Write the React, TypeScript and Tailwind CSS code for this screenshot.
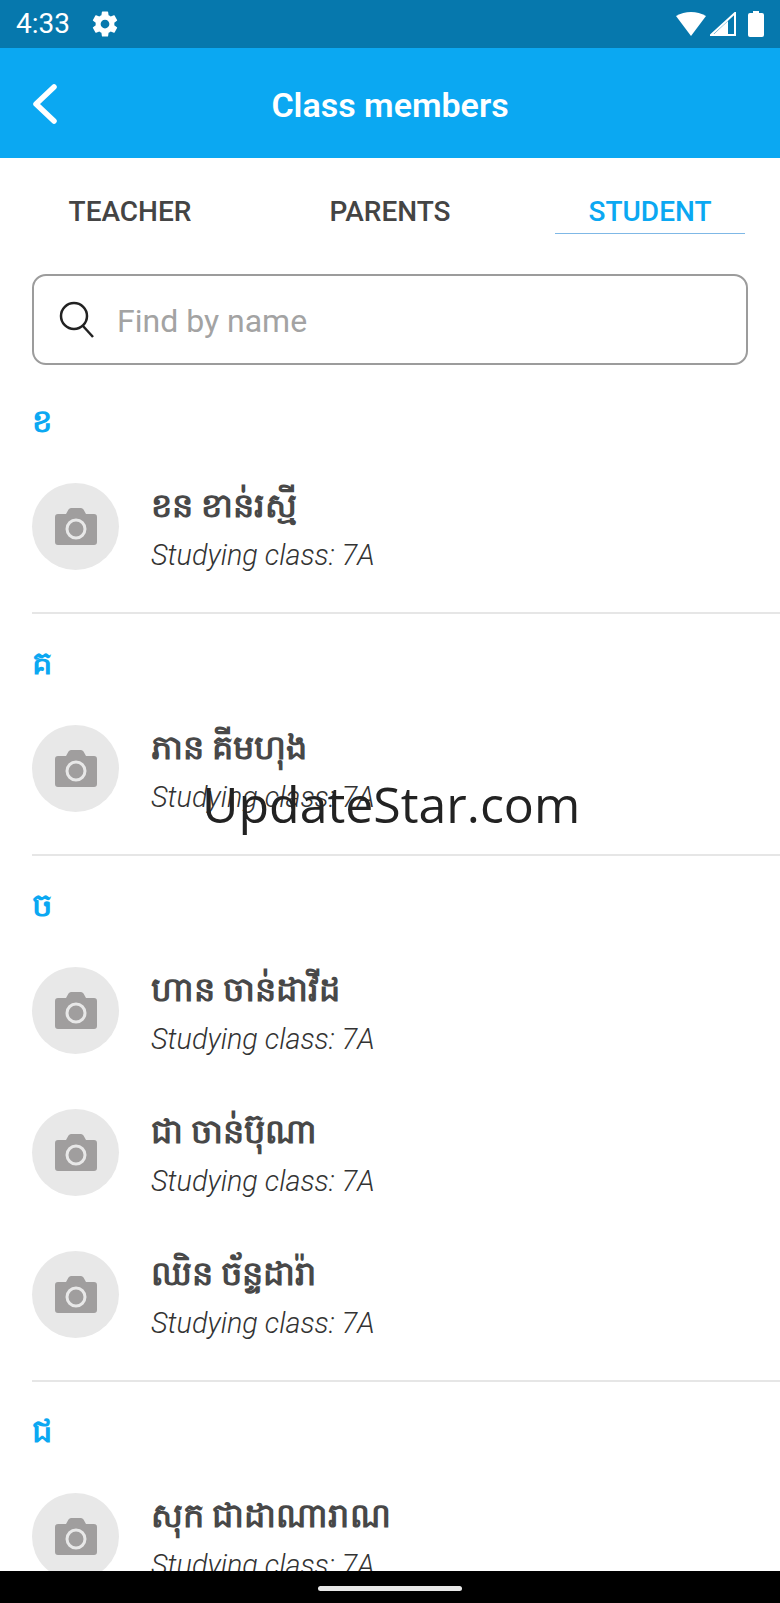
import React from 'react';

const ROBOTO = 'font-["Roboto","Noto_Sans",sans-serif]';

const sections = [
  { letter: 'ខ', people: ['ខន ខាន់រស្មី'] },
  { letter: 'គ', people: ['ភាន គីមហុង'] },
  { letter: 'ច', people: ['ហាន ចាន់ដាវីដ', 'ជា ចាន់ប៊ុណា', 'ឈិន ច័ន្ទដារ៉ា'] },
  { letter: 'ជ', people: ['សុក ជាដាណារាណ'] },
];

const CameraIcon = () => (
  <svg width="42" height="37" viewBox="0 0 42 37">
    <path
      d="M3 6h8l2.500-4.500Q14.500 0 16 0h10q1.500 0 2.500 1.500L31 6h8q3 0 3 3v25q0 3-3 3H3q-3 0-3-3V9q0-3 3-3z"
      fill="#a09e9e"
    />
    <circle cx="21" cy="21" r="9" fill="#a09e9e" stroke="#e8e8e8" strokeWidth="3" />
  </svg>
);

const Member = ({ name }: { name: string }) => (
  <div className="flex h-[87px] items-center">
    <div className="flex h-[87px] w-[87px] shrink-0 items-center justify-center rounded-full bg-[#e8e8e8]">
      <CameraIcon />
    </div>
    <div className="ml-[32px] flex flex-col">
      <div className="h-[56px] text-[33.500px] leading-[46px] font-bold text-[#484848]">{name}</div>
      <div className="text-[28.800px] leading-[32px] font-light text-[#333333] italic">Studying class: 7A</div>
    </div>
  </div>
);

export default function App() {
  return (
    <div className={`relative flex h-[1603px] w-[780px] flex-col overflow-hidden bg-white ${ROBOTO}`}>
      {/* status bar */}
      <div className="flex h-[48px] shrink-0 items-center bg-[#0678ad] pr-[16px] pl-[16px] text-white">
        <span className="text-[28px] leading-none">4:33</span>
        <svg className="ml-[20px]" width="30" height="30" viewBox="0 0 24 24" fill="white">
          <path d="M19.430 12.980c.040-.320.070-.640.070-.980s-.030-.660-.070-.980l2.110-1.650c.190-.150.240-.420.120-.640l-2-3.460c-.120-.220-.390-.300-.610-.220l-2.490 1c-.520-.400-1.080-.730-1.690-.980l-.380-2.650A.488.488 0 0 0 14 2h-4c-.250 0-.460.180-.490.420l-.380 2.650c-.610.250-1.170.590-1.690.980l-2.490-1c-.230-.090-.490 0-.610.220l-2 3.460c-.130.220-.070.490.120.640l2.110 1.650c-.040.320-.070.650-.070.980s.030.660.070.980l-2.110 1.650c-.190.150-.240.420-.120.640l2 3.460c.120.220.390.300.610.220l2.490-1c.520.400 1.080.730 1.690.980l.380 2.650c.030.240.240.420.490.420h4c.250 0 .460-.180.490-.420l.380-2.650c.610-.250 1.170-.590 1.690-.980l2.490 1c.230.090.490 0 .610-.220l2-3.460c.120-.220.070-.490-.120-.640l-2.110-1.650zM12 15.500c-1.930 0-3.500-1.570-3.500-3.500s1.570-3.500 3.500-3.500 3.500 1.570 3.500 3.500-1.570 3.500-3.500 3.500z" />
        </svg>
        <div className="ml-auto flex items-center">
          <svg width="30" height="24" viewBox="0 0 30 24" fill="white">
            <path d="M0 4Q7 0 15 0t15 4L15 24z" />
          </svg>
          <svg className="ml-[4px]" width="26" height="24" viewBox="0 0 26 24">
            <path d="M25 1v22H1z" fill="none" stroke="white" strokeWidth="2" />
            <path d="M18 9v14H3z" fill="white" />
          </svg>
          <svg className="ml-[12px]" width="16" height="26" viewBox="0 0 16 26" fill="white">
            <path d="M5 0h6v2h3q2 0 2 2v20q0 2-2 2H2q-2 0-2-2V4q0-2 2-2h3z" />
          </svg>
        </div>
      </div>

      {/* header */}
      <div className="relative flex h-[110px] shrink-0 items-center justify-center bg-[#0ba8f2] pt-[4px]">
        <svg className="absolute top-[34px] left-[28px]" width="30" height="44" viewBox="0 0 30 44" fill="none">
          <path d="M26 5 8 22l18 17" stroke="white" strokeWidth="5.500" strokeLinecap="round" strokeLinejoin="round" />
        </svg>
        <span className="text-[34px] font-semibold text-white">Class members</span>
      </div>

      {/* tabs */}
      <div className="flex shrink-0 px-[35px] pt-[30px] text-[28px] leading-[36px] font-medium text-[#444444]">
        <div className="flex h-[46px] w-[190px] justify-center pt-[6px]">TEACHER</div>
        <div className="flex h-[46px] flex-1 justify-center pt-[6px]">PARENTS</div>
        <div className="flex h-[46px] w-[190px] justify-center border-b border-[#7fb8e6] pt-[6px] text-[#0ba8f2]">STUDENT</div>
      </div>

      {/* search */}
      <div className="mx-[32px] mt-[40px] flex h-[91px] shrink-0 items-center rounded-[14px] border-2 border-[#9c9c9c] pl-[24px]">
        <svg width="38" height="38" viewBox="0 0 38 38" fill="none" stroke="#222222" strokeWidth="2.500">
          <circle cx="16" cy="15" r="13" />
          <path d="m25 25 10 11" />
        </svg>
        <span className="mt-[2px] ml-[21px] text-[32px] text-[#a3a3a3]">Find by name</span>
      </div>

      {/* list */}
      <div className="min-h-0 flex-1 overflow-hidden pt-[7px]">
        {sections.map((s, i) => (
          <div key={s.letter} className={i < sections.length - 1 ? 'ml-[32px] border-b-2 border-[#e6e6e6] pb-[42px]' : 'ml-[32px]'}>
            <div className="flex h-[111px] items-center pb-[14px] text-[32px] font-bold text-[#0ba8f2]">{s.letter}</div>
            <div className="flex flex-col gap-[55px]">
              {s.people.map((name) => (
                <Member key={name} name={name} />
              ))}
            </div>
          </div>
        ))}
      </div>

      {/* nav bar */}
      <div className="flex h-[32px] shrink-0 items-start justify-center bg-black pt-[15px]">
        <div className="h-[5px] w-[144px] rounded-full bg-[#e8e8e8]" />
      </div>

      {/* watermark */}
      <div className='absolute top-[770px] left-[202px] font-["Open_Sans",sans-serif] text-[50px] leading-[68px] text-[#222222]'>
        UpdateStar.com
      </div>
    </div>
  );
}
